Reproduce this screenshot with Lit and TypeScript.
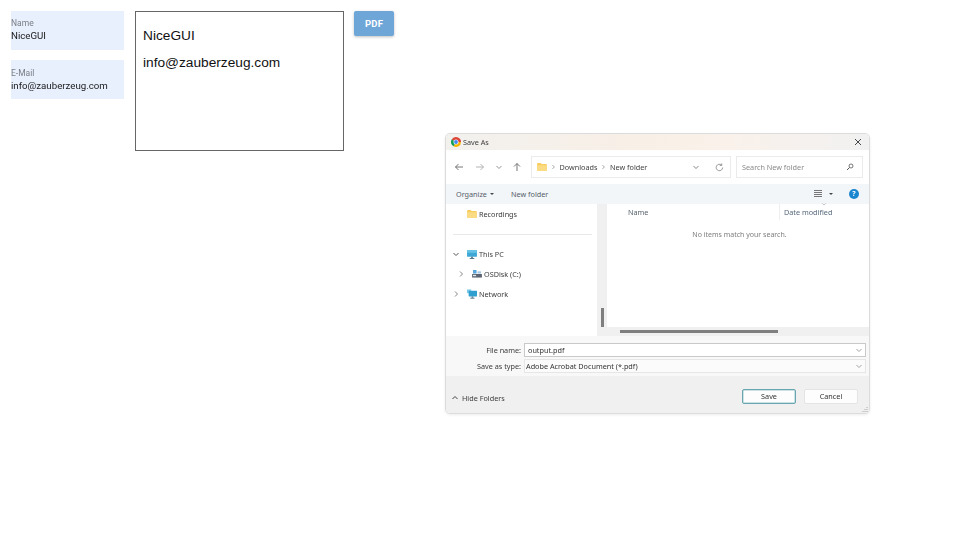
import { LitElement, html, css, svg } from 'lit';
import { customElement } from 'lit/decorators.js';

const chevronDown = svg`<path d="M1.5 3l2.5 2.5L6.500 3" fill="none" stroke="currentColor" stroke-width="0.9"/>`;
const chevronRight = svg`<path d="M3 1.500L5.500 4 3 6.500" fill="none" stroke="currentColor" stroke-width="0.9"/>`;

const folderIcon = html`<svg class="ico" width="10" height="8" viewBox="0 0 11 9">
  <path d="M0 1.200C0 .5.400 0 1 0h3l1 1.200h5c.6 0 1 .4 1 1V8c0 .6-.4 1-1 1H1c-.6 0-1-.4-1-1z" fill="#f7cd5f"/>
  <path d="M0 2.400h11V8c0 .6-.4 1-1 1H1c-.6 0-1-.4-1-1z" fill="#fbdc85"/>
</svg>`;

const monitorIcon = html`<svg class="ico" width="10" height="9" viewBox="0 0 11 10">
  <rect x="0" y="0" width="11" height="7.500" rx=".6" fill="#3fa7d6"/>
  <rect x="0" y="0" width="11" height="3" rx=".6" fill="#67c3e6"/>
  <rect x="4.500" y="7.500" width="2" height="1.500" fill="#5a7a8c"/>
  <rect x="3" y="9" width="5" height="1" fill="#4a6a7c"/>
</svg>`;

const diskIcon = html`<svg class="ico" width="10" height="8" viewBox="0 0 11 9">
  <rect x="0" y="4.500" width="11" height="4" fill="#5b6470"/>
  <rect x="1" y="5.500" width="3.500" height="1.500" fill="#e8e8e8"/>
  <rect x="1" y="0" width="4" height="4" fill="#58a6dc"/>
  <rect x="6" y="1.500" width="4" height="2.500" fill="#a9c9e3"/>
</svg>`;

const networkIcon = html`<svg class="ico" width="10" height="10" viewBox="0 0 12 11">
  <rect x="0" y="0" width="5" height="4.500" fill="#7fcbe8"/>
  <rect x="2" y="1.500" width="10" height="7" rx=".5" fill="#2f9fd0"/>
  <rect x="5.500" y="8.500" width="2" height="1.500" fill="#4f7488"/>
  <rect x="4" y="10" width="5" height="1" fill="#3f6478"/>
</svg>`;

@customElement('save-dialog')
class SaveDialog extends LitElement {
  static styles = css`
    :host {
      display: flex;
      flex-direction: column;
      width: 425px;
      height: 281px;
      box-sizing: border-box;
      border: 1px solid #dcdcdc;
      border-radius: 5px;
      overflow: hidden;
      background: #fff;
      font: 7.250px 'Noto Sans', sans-serif;
      color: #3c3c3c;
      box-shadow: 0 1px 3px rgba(0, 0, 0, 0.08);
      filter: blur(0.3px);
    }
    .ico { display: block; flex: none; }
    .titlebar {
      height: 16px;
      flex: none;
      display: flex;
      align-items: center;
      gap: 1px;
      padding: 0 7px 0 4px;
      background: linear-gradient(90deg, #f2f1ee 0%, #f8efe6 45%, #faf1ea 65%, #f1f1f1 100%);
    }
    .titlebar .title { flex: 1; }
    .navbar {
      height: 34px;
      flex: none;
      display: flex;
      align-items: center;
      padding: 0 6px 0 8px;
      background: #fff;
    }
    .navbtns { display: flex; align-items: center; width: 77px; flex: none; color: #666; }
    .navbtns svg { flex: none; }
    .crumbs {
      width: 200px;
      height: 22px;
      box-sizing: border-box;
      border: 1px solid #ebebeb;
      display: flex;
      align-items: center;
      gap: 4px;
      padding: 0 6px 0 5px;
      color: #444;
      flex: none;
    }
    .crumbs .spacer { flex: 1; }
    .crumbs svg.chev { color: #777; flex: none; }
    .search {
      margin-left: 5px;
      width: 127px;
      height: 22px;
      box-sizing: border-box;
      border: 1px solid #ebebeb;
      display: flex;
      align-items: center;
      justify-content: space-between;
      padding: 0 8px 0 5px;
      color: #8a8a8a;
      flex: none;
    }
    .toolbar {
      height: 20px;
      flex: none;
      display: flex;
      align-items: center;
      padding: 0 10px;
      background: #f3f6f8;
      color: #55606a;
    }
    .toolbar .organize { display: flex; align-items: center; gap: 3px; width: 55px; }
    .caret {
      width: 0;
      height: 0;
      border-left: 2px solid transparent;
      border-right: 2px solid transparent;
      border-top: 2.500px solid #444;
    }
    .toolbar .spacer { flex: 1; }
    .toolbar .view { display: flex; align-items: center; gap: 7px; margin-right: 16px; }
    .help {
      width: 10px;
      height: 10px;
      border-radius: 50%;
      background: #1a86d0;
      color: #fff;
      font-size: 7px;
      font-weight: 700;
      line-height: 10px;
      text-align: center;
    }
    .body { height: 132px; flex: none; display: flex; }
    .sidebar { width: 151px; flex: none; display: flex; flex-direction: column; }
    .row { height: 20px; flex: none; display: flex; align-items: center; gap: 2px; color: #3c3c3c; }
    .row svg.chev { color: #777; flex: none; }
    .divider { height: 20px; flex: none; display: flex; align-items: center; padding: 0 5px 0 7px; }
    .divider div { height: 1px; flex: 1; background: #e8e8e8; }
    .vscroll { width: 10px; flex: none; background: #f0f0f0; padding-top: 104px; box-sizing: border-box; }
    .vscroll div { width: 3px; height: 19px; margin-left: 4px; background: #7f7f7f; }
    .main { flex: 1; display: flex; flex-direction: column; min-width: 0; }
    .list { flex: 1; display: flex; flex-direction: column; }
    .head { height: 16px; flex: none; display: flex; color: #5a6670; }
    .head .name { width: 172px; padding-left: 21px; box-sizing: border-box; line-height: 16px; }
    .head .date {
      border-left: 1px solid #eeeeee;
      padding-left: 4px;
      line-height: 16px;
      color: #56687a;
      position: relative;
    }
    .head .date svg { position: absolute; left: 41px; top: -3px; color: #aaa; }
    .empty { text-align: center; color: #7d7d7d; margin-top: 10px; padding-left: 3px; font-size: 7px; }
    .hscroll { height: 9px; flex: none; background: #f0f0f0; padding: 3px 0 0 13px; box-sizing: border-box; }
    .hscroll div { width: 158px; height: 2.500px; background: #7f7f7f; }
    .fields {
      height: 40px;
      flex: none;
      background: #f8f8f8;
      padding: 7px 3px 0 0;
      box-sizing: border-box;
      display: grid;
      grid-template-columns: 78px 1fr;
      row-gap: 2px;
      grid-auto-rows: 14px;
      align-items: center;
    }
    .fields label { text-align: right; padding-right: 3px; color: #3c3c3c; }
    .input {
      height: 14px;
      box-sizing: border-box;
      border: 1px solid #c9c9c9;
      background: #fff;
      display: flex;
      align-items: center;
      justify-content: space-between;
      padding: 0 2px 0 3px;
      color: #333;
    }
    .input.plain { border-color: #e6e6e6; background: #fbfbfb; padding-left: 1px; }
    .input svg { color: #999; }
    .footer {
      flex: 1;
      background: #f0f0f0;
      display: flex;
      align-items: center;
      padding: 3px 11px 0 5px;
      position: relative;
    }
    .footer .hide { display: flex; align-items: center; gap: 3px; flex: 1; padding-top: 3px; }
    .btn {
      width: 54px;
      height: 15px;
      box-sizing: border-box;
      border: 1px solid #e4e4e4;
      border-radius: 2px;
      background: #fdfdfd;
      text-align: center;
      line-height: 13px;
      margin-left: 8px;
      color: #333;
    }
    .btn.primary { border-color: #6aa6b0; box-shadow: inset 0 0 0 0.5px #9cc6cc; margin-left: 0; }
    .grip { position: absolute; right: 1px; bottom: 1px; }
  `;

  render() {
    return html`
      <div class="titlebar">
        <svg class="ico" width="12" height="12" viewBox="0 0 24 24">
          <path d="M12 12L3.300 7A10 10 0 0 1 22 12z" fill="#db4437"/>
          <path d="M12 12L22 12A10 10 0 0 1 7 20.700z" fill="#f4b400"/>
          <path d="M12 12L7 20.700A10 10 0 0 1 3.300 7z" fill="#0f9d58"/>
          <circle cx="12" cy="12" r="5" fill="#fff"/>
          <circle cx="12" cy="12" r="3.800" fill="#4285f4"/>
        </svg>
        <span class="title">Save As</span>
        <svg class="ico" width="8" height="8" viewBox="0 0 8 8">
          <path d="M1 1l6 6M7 1L1 7" stroke="#333" stroke-width="0.9" fill="none"/>
        </svg>
      </div>
      <div class="navbar">
        <div class="navbtns">
          <svg width="10" height="10" viewBox="0 0 10 10" style="margin-right:11px"><path d="M9 5H1.500M4.500 2L1.500 5l3 3" fill="none" stroke="#666" stroke-width="0.9"/></svg>
          <svg width="10" height="10" viewBox="0 0 10 10" style="margin-right:10px"><path d="M1 5h7.500M5.500 2l3 3-3 3" fill="none" stroke="#aaa" stroke-width="0.9"/></svg>
          <svg width="8" height="8" viewBox="0 0 8 8" style="margin-right:9px;color:#888">${chevronDown}</svg>
          <svg width="10" height="10" viewBox="0 0 10 10"><path d="M5 9V1.500M2 4.500l3-3 3 3" fill="none" stroke="#666" stroke-width="0.9"/></svg>
        </div>
        <div class="crumbs">
          ${folderIcon}
          <svg class="chev" width="4.500" height="6" viewBox="1 0 6 8">${chevronRight}</svg>
          <span>Downloads</span>
          <svg class="chev" width="4.500" height="6" viewBox="1 0 6 8">${chevronRight}</svg>
          <span>New folder</span>
          <span class="spacer"></span>
          <svg class="chev" width="8" height="8" viewBox="0 0 8 8" style="margin-right:11px">${chevronDown}</svg>
          <svg class="ico" width="9" height="9" viewBox="0 0 10 10"><path d="M8.500 5A3.600 3.600 0 1 1 7.300 2.300M7.500 .5v2.200H5.300" fill="none" stroke="#777" stroke-width="0.8"/></svg>
        </div>
        <div class="search">
          <span>Search New folder</span>
          <svg class="ico" width="8" height="8" viewBox="0 0 8 8"><circle cx="5" cy="3" r="2" fill="none" stroke="#555" stroke-width="0.8"/><path d="M3.500 4.500L1 7" stroke="#555" stroke-width="1"/></svg>
        </div>
      </div>
      <div class="toolbar">
        <div class="organize"><span>Organize</span><span class="caret"></span></div>
        <span>New folder</span>
        <span class="spacer"></span>
        <div class="view">
          <svg class="ico" width="8" height="8" viewBox="0 0 8 8"><path d="M0 .5h8M0 2.500h8M0 4.500h8M0 6.500h8" stroke="#777" stroke-width="1"/></svg>
          <span class="caret"></span>
        </div>
        <div class="help">?</div>
      </div>
      <div class="body">
        <div class="sidebar">
          <div class="row" style="padding-left:21px">${folderIcon}<span>Recordings</span></div>
          <div class="divider"><div></div></div>
          <div class="row" style="padding-left:6px">
            <svg class="chev" width="8" height="8" viewBox="0 0 8 8" style="margin-right:5px;color:#444">${chevronDown}</svg>
            ${monitorIcon}<span>This PC</span>
          </div>
          <div class="row" style="padding-left:11px">
            <svg class="chev" width="8" height="8" viewBox="0 0 8 8" style="margin-right:5px">${chevronRight}</svg>
            ${diskIcon}<span>OSDisk (C:)</span>
          </div>
          <div class="row" style="padding-left:6px">
            <svg class="chev" width="8" height="8" viewBox="0 0 8 8" style="margin-right:5px">${chevronRight}</svg>
            ${networkIcon}<span>Network</span>
          </div>
        </div>
        <div class="vscroll"><div></div></div>
        <div class="main">
          <div class="list">
            <div class="head">
              <div class="name">Name</div>
              <div class="date">Date modified<svg width="6" height="6" viewBox="0 0 8 8">${chevronDown}</svg></div>
            </div>
            <div class="empty">No items match your search.</div>
          </div>
          <div class="hscroll"><div></div></div>
        </div>
      </div>
      <div class="fields">
        <label>File name:</label>
        <div class="input"><span>output.pdf</span><svg width="8" height="8" viewBox="0 0 8 8">${chevronDown}</svg></div>
        <label>Save as type:</label>
        <div class="input plain"><span>Adobe Acrobat Document (*.pdf)</span><svg width="8" height="8" viewBox="0 0 8 8">${chevronDown}</svg></div>
      </div>
      <div class="footer">
        <div class="hide">
          <svg class="ico" width="8" height="8" viewBox="0 0 8 8"><path d="M1.500 5L4 2.500 6.500 5" fill="none" stroke="#444" stroke-width="1"/></svg>
          <span>Hide Folders</span>
        </div>
        <div class="btn primary">Save</div>
        <div class="btn">Cancel</div>
        <svg class="grip" width="6" height="6" viewBox="0 0 6 6"><path d="M5 1v1M3 3v1M5 3v1M1 5v1M3 5v1M5 5v1" stroke="#aaa" stroke-width="1"/></svg>
      </div>
    `;
  }
}

@customElement('app-root')
class AppRoot extends LitElement {
  static styles = css`
    :host {
      display: block;
      position: relative;
      width: 960px;
      height: 540px;
      background: #fff;
      overflow: hidden;
    }
    .page {
      display: flex;
      align-items: flex-start;
      gap: 11px;
      padding: 11px;
    }
    .form { display: flex; flex-direction: column; gap: 10px; width: 113px; }
    .field {
      height: 39px;
      background: #e8effd;
      box-sizing: border-box;
      padding-top: 6px;
      font-family: Roboto, sans-serif;
      filter: blur(0.25px);
    }
    .field + .field { padding-top: 7px; }
    .field .label { font-size: 8.500px; line-height: 12px; color: #7a7f85; }
    .field .value { font-size: 9.700px; line-height: 14px; color: #1a1a1a; }
    .preview {
      width: 209px;
      height: 140px;
      margin-right: -1px;
      box-sizing: border-box;
      border: 1px solid #666;
      padding: 15px 7px;
      font: 13.700px 'Liberation Sans', Arial, sans-serif;
      color: #111;
    }
    .preview p { margin: 0 0 10px; line-height: 17px; }
    button {
      width: 40px;
      height: 25px;
      border: none;
      border-radius: 2px;
      background: #6fa6d8;
      color: #fff;
      font: 700 9.500px Roboto, sans-serif;
      letter-spacing: 0.2px;
      box-shadow: 0 1px 3px rgba(0, 0, 0, 0.25);
      padding: 0;
    }
    save-dialog { position: absolute; left: 445px; top: 133px; }
  `;

  render() {
    return html`
      <div class="page">
        <div class="form">
          <div class="field"><div class="label">Name</div><div class="value">NiceGUI</div></div>
          <div class="field"><div class="label">E-Mail</div><div class="value">info@zauberzeug.com</div></div>
        </div>
        <div class="preview"><p>NiceGUI</p><p>info@zauberzeug.com</p></div>
        <button>PDF</button>
      </div>
      <save-dialog></save-dialog>
    `;
  }
}
